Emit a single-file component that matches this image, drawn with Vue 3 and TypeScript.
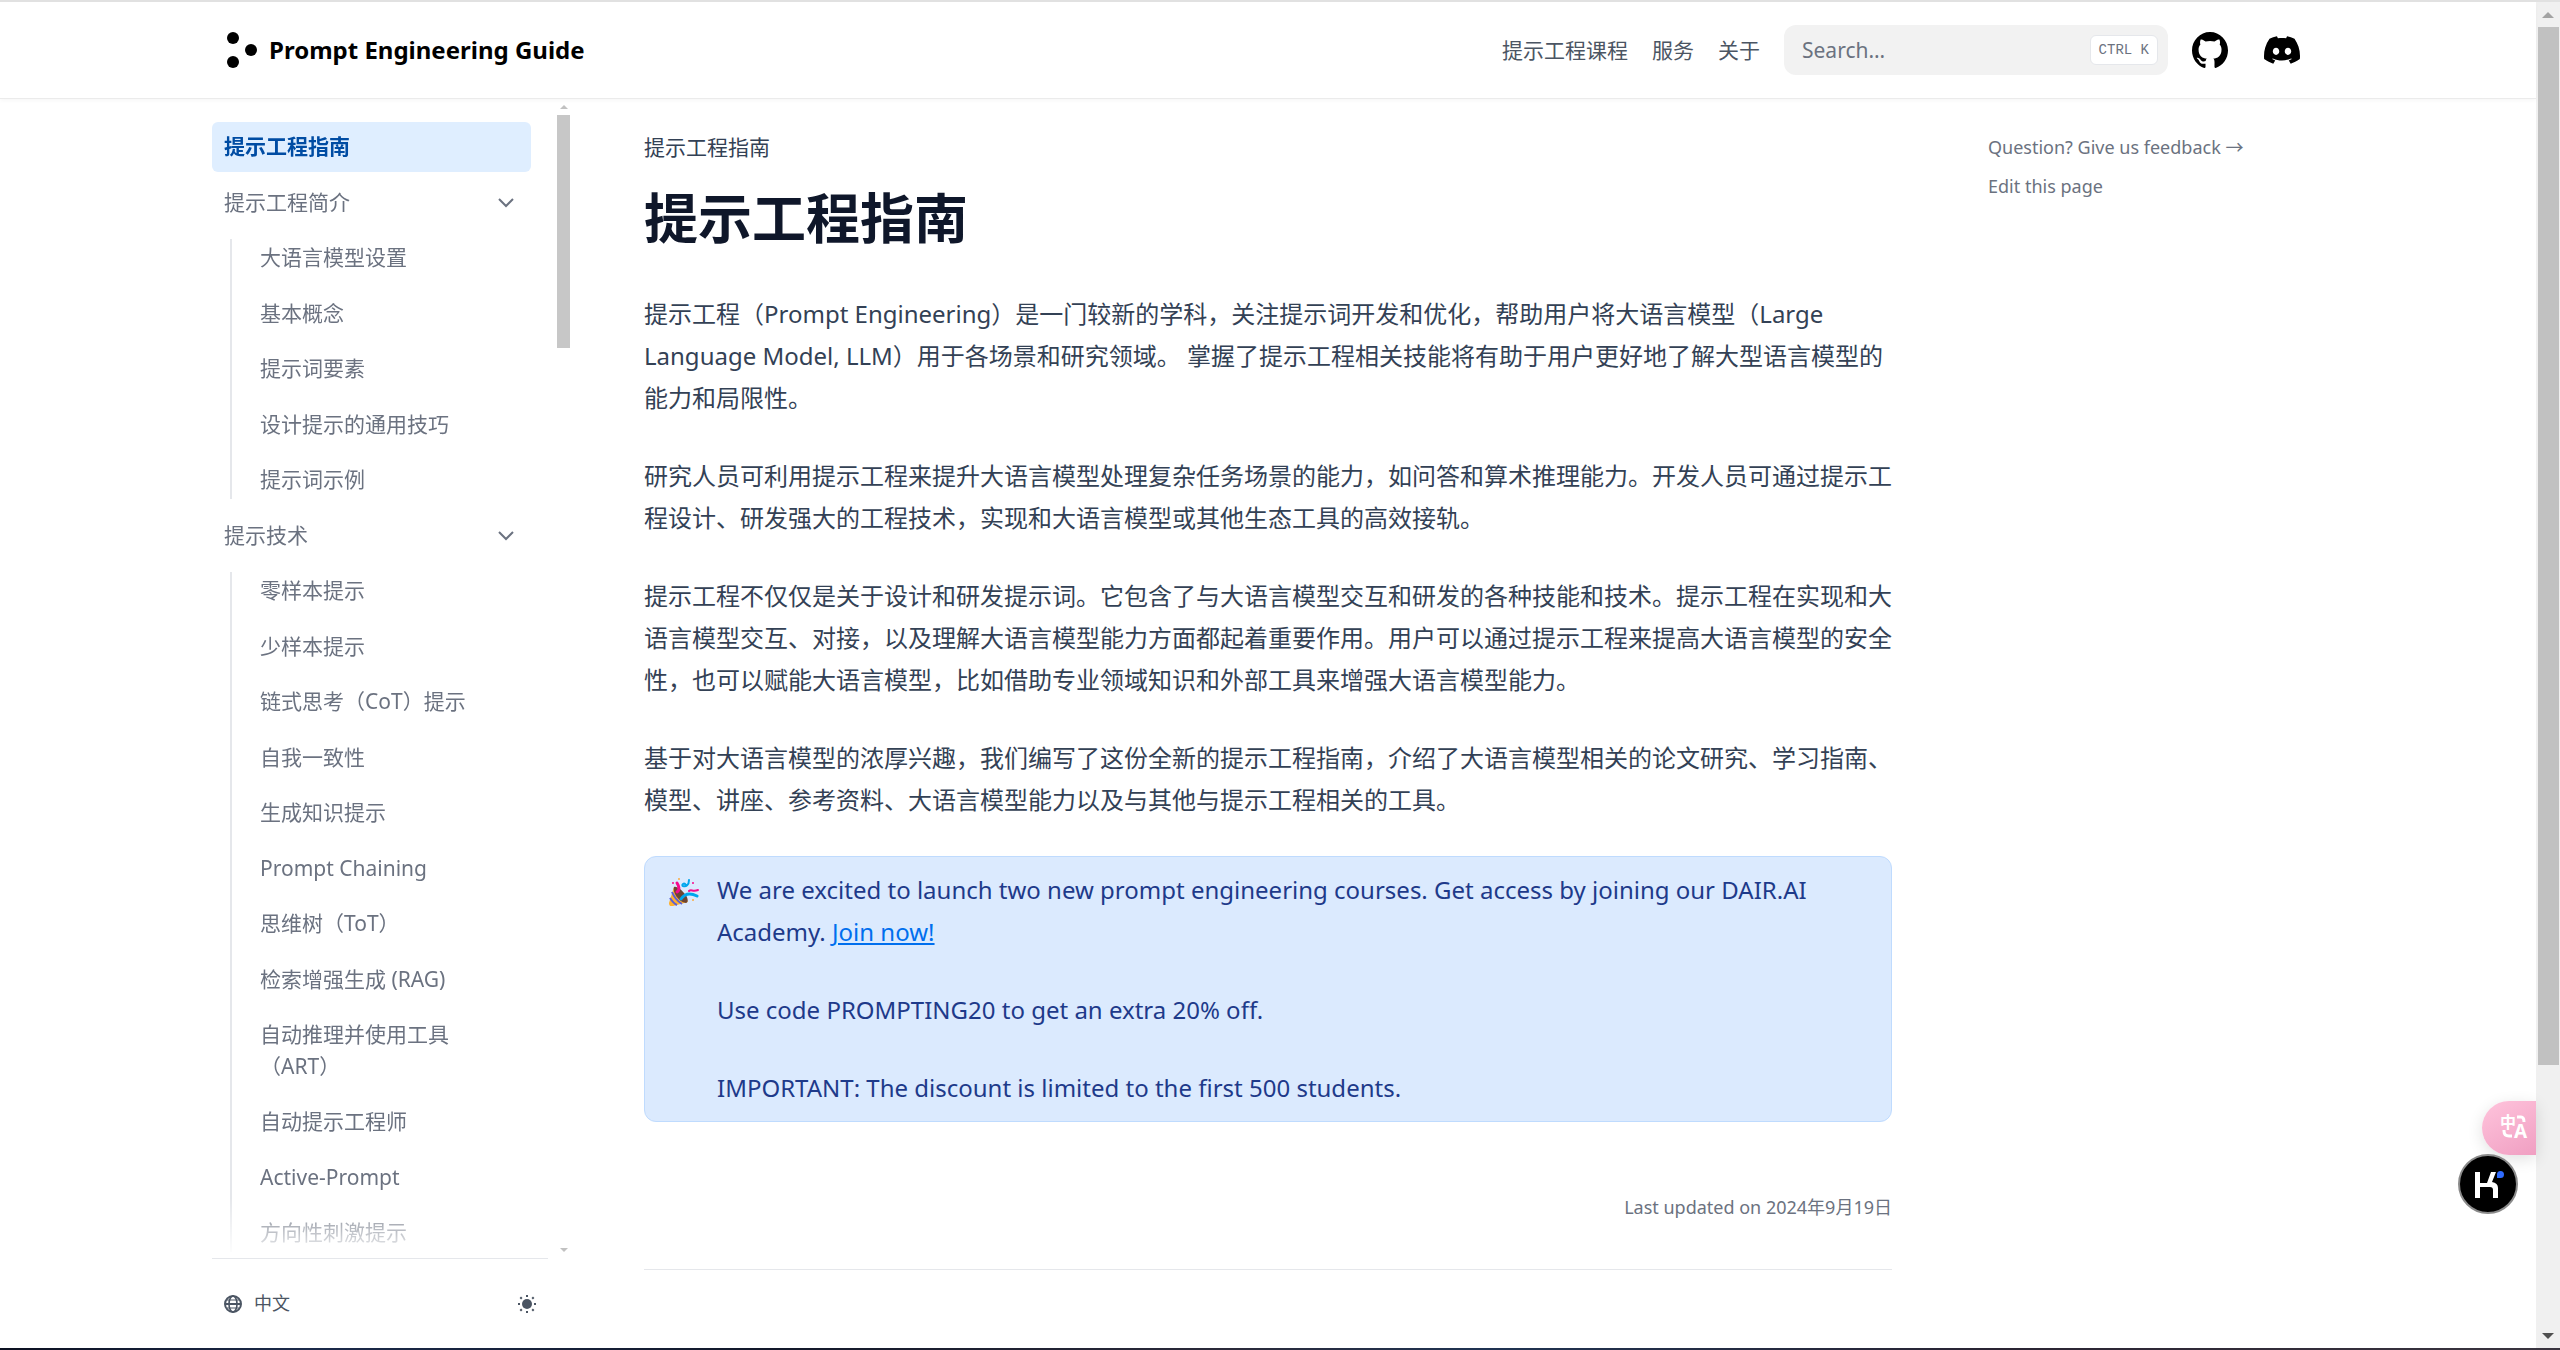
<script setup lang="ts">
interface Group {
  title: string
  items: string[]
}

const navLinks: string[] = ['提示工程课程', '服务', '关于']

const groups: Group[] = [
  {
    title: '提示工程简介',
    items: ['大语言模型设置', '基本概念', '提示词要素', '设计提示的通用技巧', '提示词示例'],
  },
  {
    title: '提示技术',
    items: [
      '零样本提示',
      '少样本提示',
      '链式思考（CoT）提示',
      '自我一致性',
      '生成知识提示',
      'Prompt Chaining',
      '思维树（ToT）',
      '检索增强生成 (RAG)',
      '自动推理并使用工具（ART）',
      '自动提示工程师',
      'Active-Prompt',
      '方向性刺激提示',
    ],
  },
]

const paragraphs: string[] = [
  '提示工程（Prompt Engineering）是一门较新的学科，关注提示词开发和优化，帮助用户将大语言模型（Large Language Model, LLM）用于各场景和研究领域。 掌握了提示工程相关技能将有助于用户更好地了解大型语言模型的能力和局限性。',
  '研究人员可利用提示工程来提升大语言模型处理复杂任务场景的能力，如问答和算术推理能力。开发人员可通过提示工程设计、研发强大的工程技术，实现和大语言模型或其他生态工具的高效接轨。',
  '提示工程不仅仅是关于设计和研发提示词。它包含了与大语言模型交互和研发的各种技能和技术。提示工程在实现和大语言模型交互、对接，以及理解大语言模型能力方面都起着重要作用。用户可以通过提示工程来提高大语言模型的安全性，也可以赋能大语言模型，比如借助专业领域知识和外部工具来增强大语言模型能力。',
  '基于对大语言模型的浓厚兴趣，我们编写了这份全新的提示工程指南，介绍了大语言模型相关的论文研究、学习指南、模型、讲座、参考资料、大语言模型能力以及与其他与提示工程相关的工具。',
]
</script>

<template>
  <div class="window">
    <div class="edge-top"></div>
    <div class="viewport">
      <div class="page">
        <header class="header">
          <div class="header-inner">
            <a class="brand" href="#">
              <svg class="brand-logo" width="35" height="36" viewBox="0 0 35 36" aria-hidden="true">
                <circle cx="9" cy="6" r="6" />
                <circle cx="27" cy="18" r="6" />
                <circle cx="9" cy="30" r="6" />
              </svg>
              <span>Prompt Engineering Guide</span>
            </a>
            <nav class="nav">
              <a v-for="link in navLinks" :key="link" href="#">{{ link }}</a>
            </nav>
            <div class="search">
              <input type="search" placeholder="Search…" aria-label="Search" />
              <kbd>CTRL K</kbd>
            </div>
            <a class="icon-link" href="#" aria-label="GitHub">
              <svg width="36" height="36" viewBox="3 3 18 18" aria-hidden="true">
                <path d="M12 3C7.0275 3 3 7.12937 3 12.2276C3 16.3109 5.57625 19.7597 9.15374 20.9824C9.60374 21.0631 9.77249 20.7863 9.77249 20.5441C9.77249 20.3249 9.76125 19.5982 9.76125 18.8254C7.5 19.2522 6.915 18.2602 6.735 17.7412C6.63375 17.4759 6.19499 16.6569 5.8125 16.4378C5.4975 16.2647 5.0475 15.838 5.80124 15.8264C6.51 15.8149 7.01625 16.4954 7.18499 16.7723C7.99499 18.1679 9.28875 17.7758 9.80625 17.5335C9.885 16.9337 10.1212 16.53 10.38 16.2993C8.3775 16.0687 6.285 15.2728 6.285 11.7432C6.285 10.7397 6.63375 9.9092 7.20749 9.26326C7.1175 9.03257 6.8025 8.08674 7.2975 6.81794C7.2975 6.81794 8.05125 6.57571 9.77249 7.76377C10.4925 7.55615 11.2575 7.45234 12.0225 7.45234C12.7875 7.45234 13.5525 7.55615 14.2725 7.76377C15.9937 6.56418 16.7475 6.81794 16.7475 6.81794C17.2424 8.08674 16.9275 9.03257 16.8375 9.26326C17.4113 9.9092 17.76 10.7281 17.76 11.7432C17.76 15.2843 15.6563 16.0687 13.6537 16.2993C13.98 16.5877 14.2613 17.1414 14.2613 18.0065C14.2613 19.2407 14.25 20.2326 14.25 20.5441C14.25 20.7863 14.4188 21.0746 14.8688 20.9824C16.6554 20.364 18.2079 19.1866 19.3078 17.6162C20.4077 16.0457 20.9995 14.1611 21 12.2276C21 7.12937 16.9725 3 12 3Z" />
              </svg>
            </a>
            <a class="icon-link" href="#" aria-label="Discord">
              <svg width="36" height="36" viewBox="0 5 30.67 23.25" aria-hidden="true">
                <path d="M26.0015 6.9529C24.0021 6.03845 21.8787 5.37198 19.6623 5C19.3833 5.48048 19.0733 6.13144 18.8563 6.64292C16.4989 6.30193 14.1585 6.30193 11.8336 6.64292C11.6166 6.13144 11.2911 5.48048 11.0276 5C8.79575 5.37198 6.67235 6.03845 4.6869 6.9529C0.672601 12.8736 -0.41235 18.6548 0.130124 24.3585C2.79599 26.2959 5.36889 27.4739 7.89682 28.2489C8.51679 27.4119 9.07477 26.5129 9.55525 25.5675C8.64079 25.2265 7.77283 24.808 6.93587 24.312C7.15286 24.1571 7.36986 23.9866 7.57135 23.8161C12.6241 26.1255 18.0969 26.1255 23.0876 23.8161C23.3046 23.9866 23.5061 24.1571 23.7231 24.312C22.8861 24.808 22.0182 25.2265 21.1037 25.5675C21.5842 26.5129 22.1422 27.4119 22.7621 28.2489C25.2885 27.4739 27.8769 26.2959 30.5288 24.3585C31.1952 17.7559 29.4733 12.0212 26.0015 6.9529ZM10.2527 20.8402C8.73376 20.8402 7.49382 19.4608 7.49382 17.7714C7.49382 16.082 8.70276 14.7025 10.2527 14.7025C11.7871 14.7025 13.0425 16.082 13.0115 17.7714C13.0115 19.4608 11.7871 20.8402 10.2527 20.8402ZM20.4373 20.8402C18.9183 20.8402 17.6768 19.4608 17.6768 17.7714C17.6768 16.082 18.8873 14.7025 20.4373 14.7025C21.9717 14.7025 23.2271 16.082 23.1961 17.7714C23.1961 19.4608 21.9872 20.8402 20.4373 20.8402Z" />
              </svg>
            </a>
          </div>
        </header>

        <div class="columns">
          <aside class="sidebar">
            <div class="sidebar-scroll">
              <nav class="menu" aria-label="目录">
                <a class="entry active" href="#">提示工程指南</a>
                <div v-for="group in groups" :key="group.title" class="group">
                  <button class="entry toggle" type="button" aria-expanded="true">
                    <span>{{ group.title }}</span>
                    <svg width="18" height="18" viewBox="0 0 18 18" aria-hidden="true">
                      <path d="M2 6L9 13L16 6" />
                    </svg>
                  </button>
                  <div class="sublist">
                    <a v-for="item in group.items" :key="item" class="entry" href="#">{{ item }}</a>
                  </div>
                </div>
              </nav>
              <div class="thin-bar" aria-hidden="true">
                <svg width="8" height="4" viewBox="0 0 8 4"><path d="M0 4L4 0L8 4Z" /></svg>
                <div class="thin-track"><div class="thin-thumb"></div></div>
                <svg width="8" height="4" viewBox="0 0 8 4"><path d="M0 0L4 4L8 0Z" /></svg>
              </div>
            </div>
            <div class="sidebar-footer">
              <button class="locale" type="button">
                <svg width="18" height="18" viewBox="0 0 18 18" aria-hidden="true">
                  <g fill="none" stroke="currentColor" stroke-width="2">
                    <circle cx="9" cy="9" r="8" />
                    <ellipse cx="9" cy="9" rx="4" ry="8" stroke-width="1.6" />
                    <path d="M1 9H17" />
                    <path d="M3 5H15M3 13H15" stroke-width="1" />
                  </g>
                </svg>
                <span>中文</span>
              </button>
              <button class="theme" type="button" aria-label="Theme">
                <svg width="18" height="18" viewBox="0 0 18 18" aria-hidden="true">
                  <circle cx="9" cy="9" r="5" fill="currentColor" />
                  <path d="M9 0V2M9 16V18M0 9H2M16 9H18M2.300 2.300L3.800 3.800M14.200 14.200L15.700 15.700M2.300 15.700L3.800 14.200M14.200 3.800L15.700 2.300" stroke="currentColor" stroke-width="2" />
                </svg>
              </button>
            </div>
          </aside>

          <main class="article">
            <div class="breadcrumb">提示工程指南</div>
            <h1>提示工程指南</h1>
            <p v-for="(text, i) in paragraphs" :key="i">{{ text }}</p>
            <div class="callout">
              <svg class="popper" width="30" height="28" viewBox="0 0 30 28" aria-hidden="true">
                <path d="M5 9C10 12 17 18 19 24L4 28C1 29 0 27 0 25Z" fill="#ffb02e" />
                <path d="M5 9C3 13 9 24 17 25C20 24 19 19 15 15C11 10 7 8 5 9Z" fill="#6d4534" />
                <path d="M3 14C5 19 8 23 13 26M1 20C3 23 5 26 8 27" fill="none" stroke="#5b5fd6" stroke-width="2" />
                <path d="M8 14C11 12 10 8 8 5" fill="none" stroke="#f70a8d" stroke-width="3" stroke-linecap="round" />
                <path d="M12 21C16 15 22 15 28 18" fill="none" stroke="#00a6ed" stroke-width="3" stroke-linecap="round" />
                <path d="M20 2C20 7 17 9 14 8C12 7 15 4 17 7" fill="none" stroke="#00a6ed" stroke-width="2" stroke-linecap="round" />
                <path d="M20 13C22 11 24 14 29 12" fill="none" stroke="#f70a8d" stroke-width="2" stroke-linecap="round" />
                <circle cx="4" cy="5" r="1" fill="#f70a8d" />
                <circle cx="24" cy="5" r="1" fill="#f70a8d" />
                <circle cx="10" cy="1" r="1" fill="#fcab40" />
                <circle cx="24" cy="22" r="1" fill="#fcab40" />
              </svg>
              <div class="callout-body">
                <p>We are excited to launch two new prompt engineering courses. Get access by joining our DAIR.AI Academy. <a href="#">Join now!</a></p>
                <p>Use code PROMPTING20 to get an extra 20% off.</p>
                <p>IMPORTANT: The discount is limited to the first 500 students.</p>
              </div>
            </div>
            <div class="updated">Last updated on 2024年9月19日</div>
            <hr />
          </main>

          <aside class="toc">
            <a href="#">Question? Give us feedback →</a>
            <a href="#">Edit this page</a>
          </aside>
        </div>

        <button class="translate" type="button" aria-label="翻译">
          <svg width="40" height="40" viewBox="0 0 40 40" aria-hidden="true">
            <text x="4" y="20" font-size="16">中</text>
            <text x="18" y="30" font-size="19">A</text>
            <path d="M21 9H25Q28 9 28 14M8 22V23Q8 28 13 28H16" />
          </svg>
        </button>
        <button class="assistant" type="button" aria-label="Assistant">
          <svg width="60" height="60" viewBox="0 0 60 60" aria-hidden="true">
            <circle cx="30" cy="30" r="29" fill="#000" stroke="#8a8a8a" stroke-width="2" />
            <path d="M17 18H22V29H29L33 18H38L34 28Q40 29 40 34V44H35V36Q35 33 32 33H22V44H17Z" fill="#fff" />
            <path d="M39 24V20.500A3.500 3.500 0 1 1 42.500 24Z" fill="#2f6bff" />
          </svg>
        </button>
      </div>

      <div class="page-bar" aria-hidden="true">
        <svg width="12" height="6" viewBox="0 0 12 6"><path d="M0 6L6 0L12 6Z" fill="#a3a3a3" /></svg>
        <div class="page-track"><div class="page-thumb"></div></div>
        <svg width="12" height="6" viewBox="0 0 12 6"><path d="M0 0L6 6L12 0Z" fill="#505050" /></svg>
      </div>
    </div>
    <div class="edge-bottom"></div>
  </div>
</template>

<style>
body {
  margin: 0;
  background: #fff;
}
</style>

<style scoped>
.window {
  display: flex;
  flex-direction: column;
  height: 100vh;
  overflow: hidden;
  background: #fff;
  color: #334155;
  font-family: "Noto Sans", "Noto Sans CJK SC", sans-serif;
  font-size: 24px;
  line-height: 42px;
  text-spacing-trim: space-all;
}
.window * {
  box-sizing: border-box;
}
a {
  color: inherit;
  text-decoration: none;
}
button {
  border: 0;
  padding: 0;
  background: none;
  font: inherit;
  color: inherit;
  cursor: pointer;
}
svg {
  display: block;
  flex: none;
}
.edge-top {
  flex: none;
  height: 2px;
  background: #e1e1e1;
}
.edge-bottom {
  flex: none;
  height: 2px;
  background: linear-gradient(90deg, #0c1020, #1b2a4a 12%, #12182a 30%, #2b2a3a 48%, #1f3352 58%, #2a2433 78%, #3a3540);
}
.viewport {
  flex: 1;
  min-height: 0;
  display: flex;
}
.page {
  position: relative;
  flex: 1;
  min-width: 0;
  display: flex;
  flex-direction: column;
}

/* Header */
.header {
  flex: none;
  border-bottom: 1px solid #ebebeb;
  box-shadow: 0 2px 4px rgba(0, 0, 0, 0.03);
}
.header-inner {
  display: flex;
  align-items: center;
  gap: 24px;
  max-width: 2160px;
  height: 96px;
  margin: 0 auto;
  padding: 0 36px;
  font-size: 21px;
}
.brand {
  display: flex;
  align-items: center;
  gap: 10px;
  margin-right: auto;
  color: #000;
  font-size: 24px;
  font-weight: 700;
}
.nav {
  display: flex;
  gap: 24px;
  color: #4b5563;
}
.search {
  display: flex;
  align-items: center;
  width: 384px;
  height: 50px;
  padding: 0 10px 0 18px;
  border-radius: 12px;
  background: #f2f2f2;
}
.search input {
  flex: 1;
  min-width: 0;
  border: 0;
  padding: 0;
  outline: 0;
  background: none;
  font: inherit;
  color: #6b7280;
}
.search input::placeholder {
  color: #6b7280;
  opacity: 1;
}
.search kbd {
  height: 30px;
  padding: 0 8px;
  border: 1px solid #e5e7eb;
  border-radius: 6px;
  background: #fff;
  color: #6b7280;
  font-family: "Liberation Mono", monospace;
  font-size: 14px;
  line-height: 28px;
}
.icon-link {
  padding: 12px;
  margin: 0 0 0 -12px;
  color: #000;
}

/* Columns */
.columns {
  flex: 1;
  min-height: 0;
  display: flex;
  width: 100%;
  max-width: 2160px;
  margin: 0 auto;
}

/* Sidebar */
.sidebar {
  flex: none;
  display: flex;
  flex-direction: column;
  width: 384px;
  font-size: 21px;
  line-height: 1.5;
  color: #6b7280;
}
.sidebar-scroll {
  flex: 1;
  min-height: 0;
  display: flex;
  gap: 26px;
  padding: 0 2px 0 24px;
}
.menu {
  flex: 1;
  min-width: 0;
  display: flex;
  flex-direction: column;
  gap: 6px;
  padding-top: 23px;
  overflow: hidden;
  mask-image: linear-gradient(#000 calc(100% - 60px), transparent 100%);
}
.entry {
  display: block;
  flex: none;
  padding: 9px 12px;
  border-radius: 6px;
}
.active {
  background: #dfeeff;
  color: #004ca3;
  font-weight: 700;
}
.toggle {
  display: flex;
  align-items: center;
  justify-content: space-between;
  width: 100%;
  padding-right: 16px;
}
.toggle path {
  fill: none;
  stroke: currentColor;
  stroke-width: 2;
}
.group {
  flex: none;
}
.sublist {
  position: relative;
  display: flex;
  flex-direction: column;
  gap: 6px;
  margin-top: 6px;
  padding: 0 40px 0 36px;
}
.sublist::before {
  content: "";
  position: absolute;
  top: 6px;
  bottom: 6px;
  left: 18px;
  width: 2px;
  background: #e5e7eb;
}
.thin-bar {
  flex: none;
  display: flex;
  flex-direction: column;
  align-items: center;
  gap: 6px;
  width: 13px;
  padding: 6px 0;
  fill: #c1c1c1;
}
.thin-track {
  flex: 1;
  width: 100%;
}
.thin-thumb {
  height: 233px;
  background: #c7c7c7;
}
.sidebar-footer {
  flex: none;
  display: flex;
  align-items: center;
  justify-content: space-between;
  height: 90px;
  margin: 0 24px;
  padding: 0 12px;
  border-top: 1px solid #e5e7eb;
  color: #4b5563;
  font-size: 18px;
}
.locale {
  display: flex;
  align-items: center;
  gap: 12px;
}

/* Article */
.article {
  flex: 1;
  min-width: 0;
  padding: 24px 72px 0;
}
.breadcrumb {
  font-size: 21px;
  line-height: 48px;
}
h1 {
  margin: 14px 0 0;
  color: #0f172a;
  font-size: 54px;
  font-weight: 700;
  line-height: 66px;
}
p {
  margin: 36px 0 0;
}
h1 + p {
  margin-top: 42px;
}
.callout {
  display: flex;
  margin-top: 35px;
  padding: 12px 24px;
  border: 1px solid #bfdbfe;
  border-radius: 12px;
  background: #dbeafe;
  color: #1e3a8a;
}
.popper {
  margin: 9px 18px 0 0;
}
.callout-body {
  flex: 1;
  min-width: 0;
}
.callout-body p:first-child {
  margin-top: 0;
}
.callout a {
  color: #006fee;
  text-decoration: underline;
}
.updated {
  margin-top: 72px;
  color: #6b7280;
  font-size: 18px;
  line-height: 27px;
  text-align: right;
}
hr {
  margin: 48px 0 0;
  border: 0;
  border-top: 1px solid #e5e7eb;
}

/* Right column */
.toc {
  flex: none;
  display: flex;
  flex-direction: column;
  align-items: flex-start;
  gap: 12px;
  width: 384px;
  padding: 35px 24px 0;
  color: #6b7280;
  font-size: 18px;
  line-height: 27px;
}

/* Floating tools */
.translate {
  position: absolute;
  right: 0;
  bottom: 193px;
  width: 54px;
  height: 54px;
  padding-left: 14px;
  border-radius: 27px 0 0 27px;
  background: linear-gradient(150deg, #ffc4dc, #f09fc2);
  box-shadow: 0 4px 16px rgba(0, 0, 0, 0.12);
}
.translate svg {
  overflow: visible;
}
.translate text {
  fill: #fff;
  font-weight: 700;
}
.translate path {
  fill: none;
  stroke: #fff;
  stroke-width: 3;
}
.assistant {
  position: absolute;
  right: 18px;
  bottom: 134px;
}

/* Page scrollbar */
.page-bar {
  flex: none;
  display: flex;
  flex-direction: column;
  align-items: center;
  gap: 9px;
  width: 24px;
  padding: 10px 0 9px;
  background: #f0f0f0;
}
.page-track {
  flex: 1;
  width: 100%;
  padding: 0 1px 0 2px;
}
.page-thumb {
  height: 80%;
  background: #c1c1c1;
}
</style>
